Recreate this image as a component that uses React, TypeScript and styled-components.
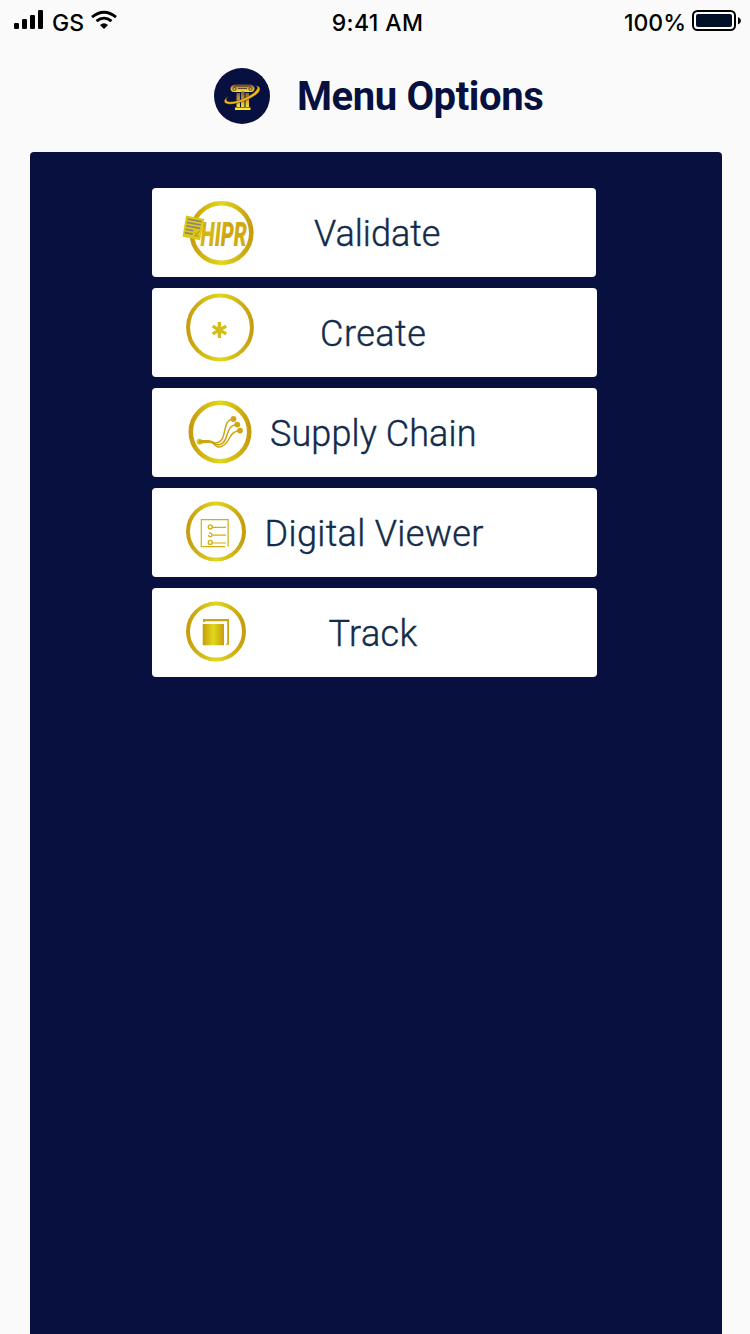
import React from 'react';
import styled, { createGlobalStyle } from 'styled-components';

const GlobalStyle = createGlobalStyle`
  * { box-sizing: border-box; }
  body { margin: 0; background: #fafafa; }
`;

const Screen = styled.div`
  height: 1334px;
  display: flex;
  flex-direction: column;
  overflow: hidden;
  background: #fafafa;
  color: #07103e;
  font-family: Roboto, "Liberation Sans", sans-serif;
`;

const StatusBar = styled.header`
  height: 44px;
  padding: 0 9px 0 14px;
  display: grid;
  grid-template-columns: 1fr auto 1fr;
  align-items: center;
  color: #000;
  font: 500 23px/46px Inter, "Liberation Sans", sans-serif;
`;

const StatusGroup = styled.div<{ $end?: boolean }>`
  display: flex;
  height: 44px;
  justify-content: ${(p) => (p.$end ? 'flex-end' : 'flex-start')};
  svg { flex: none; }
`;

const StatusText = styled.span<{ $spacing: number; $left?: number; $right?: number }>`
  letter-spacing: ${(p) => p.$spacing}px;
  margin-left: ${(p) => p.$left ?? 0}px;
  margin-right: ${(p) => p.$right ?? 0}px;
  height: 44px;
  white-space: nowrap;
`;

const TitleBar = styled.div`
  height: 108px;
  padding: 24px 0 0 214px;
  display: flex;
  align-items: flex-start;
`;

const Title = styled.h1`
  margin: 1px 0 0 27px;
  font-size: 40px;
  line-height: 56px;
  font-weight: 700;
  letter-spacing: -0.4px;
  white-space: nowrap;
`;

const Panel = styled.main`
  flex: 1;
  margin: 0 28px 0 30px;
  padding: 36px 0 0 122px;
  display: flex;
  flex-direction: column;
  gap: 11.5px;
  background: #07103e;
  border-radius: 4px 4px 0 0;
`;

const MenuButton = styled.button<{ $width: number }>`
  width: ${(p) => p.$width}px;
  height: 88.5px;
  flex: none;
  padding: 0;
  border: 0;
  border-radius: 4px;
  background: #fff;
  color: #122b4a;
  font-family: inherit;
  display: grid;
  grid-template-columns: 1fr;
  align-items: center;
`;

const IconSlot = styled.span`
  grid-area: 1 / 1;
  height: 88px;
  align-self: start;
  justify-self: start;
  svg { display: block; }
`;

const Label = styled.span<{ $spacing: number; $left: number }>`
  grid-area: 1 / 1;
  justify-self: start;
  margin-left: ${(p) => p.$left}px;
  padding-top: 4px;
  font-size: 36px;
  line-height: 44px;
  font-weight: 350;
  -webkit-text-stroke: 0.4px #122b4a;
  letter-spacing: ${(p) => p.$spacing}px;
  white-space: nowrap;
`;

const Gradients = () => (
  <svg width="0" height="0" style={{ position: 'absolute' }} aria-hidden>
    <defs>
      <linearGradient id="gold" x1="0" y1="0" x2="1" y2="0">
        <stop offset="0" stopColor="#c79d0f" />
        <stop offset="0.5" stopColor="#e0d81c" />
        <stop offset="1" stopColor="#c79d0f" />
      </linearGradient>
      <linearGradient id="letters" x1="0" y1="0" x2="1" y2="0.4">
        <stop offset="0" stopColor="#cfa90f" />
        <stop offset="0.35" stopColor="#d6ba14" />
        <stop offset="0.65" stopColor="#cda50f" />
        <stop offset="1" stopColor="#cfae12" />
      </linearGradient>
      <linearGradient id="pillar" x1="0" y1="0" x2="0" y2="1">
        <stop offset="0" stopColor="#7b552b" />
        <stop offset="0.5" stopColor="#d8a83a" />
        <stop offset="1" stopColor="#fff12c" />
      </linearGradient>
    </defs>
  </svg>
);

const Ring = ({ cx, cy, r, w }: { cx: number; cy: number; r: number; w: number }) => (
  <circle cx={cx} cy={cy} r={r} fill="none" stroke="url(#gold)" strokeWidth={w} />
);

const ValidateIcon = () => (
  <svg width="110" height="88" viewBox="0 0 110 88">
    <Ring cx={69.5} cy={45} r={29.8} w={4.6} />
    <text transform="translate(48.500 58) scale(.61 1)" fontFamily="Roboto, sans-serif" fontSize="34" fontWeight="900" fontStyle="italic" fill="url(#letters)">HIPR</text>
    <path d="M34 27.500 52.300 31 48 52.200 30.500 48.700z" fill="#dcc818" />
    <path d="m35.500 31 14 2.600M34.800 34.400l14 2.600M34.100 37.800l14 2.600M33.400 41.200l8 1.500M32.700 44.600l8 1.500" stroke="#8d8778" strokeWidth="1.600" />
    <path d="m43 44.500 1.500 2 3-3.500m-5 4.500 4 .6" stroke="#a8830e" strokeWidth=".9" fill="none" />
  </svg>
);

const CreateIcon = () => (
  <svg width="110" height="88" viewBox="0 0 110 88">
    <Ring cx={68} cy={39.5} r={31.9} w={4} />
    <path d="M67.4 34v16M60.6 38.1l13.6 7.8M60.6 45.9l13.6-7.8" stroke="#d3bd16" strokeWidth="3.4" />
  </svg>
);

const SupplyIcon = () => (
  <svg width="110" height="88" viewBox="0 0 110 88">
    <Ring cx={68} cy={44} r={29.2} w={4.6} />
    <g fill="none" stroke="#cda711" strokeWidth="1.500" strokeLinecap="round">
      <path d="M48 53C56 52.500 60 55.500 65 54.800C76 53 69 31.500 81.500 31" />
      <path d="M60 54C63 56.500 65 57.500 68 56.500C78 53.500 72 37.500 85.300 36.600" />
      <path d="M60 54.500C65 59.500 67 59.500 70 58.200C79 54 76 43.500 88 42.600" />
    </g>
    <circle cx="47.500" cy="53.700" r="2.900" fill="#ddc51a" />
    <path d="M47 51.700c5 1 10-1 16 2.500l1 2c-6-1.500-11-1.500-17-.2z" fill="#cda711" />
    <g fill="#cda711">
      <circle cx="81.500" cy="31" r="2.900" />
      <circle cx="85.300" cy="36.600" r="2.900" />
      <circle cx="88" cy="42.600" r="2.900" />
    </g>
  </svg>
);

const ViewerIcon = () => (
  <svg width="110" height="88" viewBox="0 0 110 88">
    <Ring cx={64} cy={43.5} r={28} w={4} />
    <g fill="none" stroke="#d0b015" strokeWidth="1.200">
      <path d="M76.100 58.500V31.700H49.300v27H73" />
      <path d="M60.500 39.300H74M60.500 47.200H74M60.500 55H74" />
      <circle cx="58.300" cy="38.900" r="2" strokeWidth="1.400" />
      <path d="M57 45.300c3.500-1 4 3.200 1.500 3.400-1 .1-2-.5-2-1.600" strokeWidth="1.400" />
      <circle cx="58.300" cy="54.400" r="2" strokeWidth="1.400" />
    </g>
  </svg>
);

const TrackIcon = () => (
  <svg width="110" height="88" viewBox="0 0 110 88">
    <Ring cx={64} cy={43.500} r={28} w={4} />
    <path d="M50.700 36H72v21.300H50.700z" fill="url(#gold)" />
    <path d="M51 33.900v-2.800h26v25.700h-3v-1h1.200V33.300H53v.6z" fill="#c9a512" />
  </svg>
);

const BrandLogo = () => (
  <svg width="56" height="56" viewBox="0 0 56 56">
    <circle cx="28" cy="28" r="28" fill="#07103e" />
    <g fill="url(#pillar)">
      <path d="M20.500 16.500h16q4.500 1 4 4.500-.800 3.500-4.500 3H21q-4 .5-4.500-3-.3-3.500 4-4.500z" />
      <path d="M22.500 25h3.500v14h-3.500zM27 23.500h3.500V39H27zM31.500 25H35v14h-3.500zM21 39.500h15.500V42H21z" />
    </g>
    <g fill="none" stroke="#3a2d33" strokeWidth=".8">
      <path d="M20 18h17M24 20.500h9" />
      <circle cx="20.500" cy="21" r="1.600" />
      <circle cx="36.500" cy="21" r="1.600" />
    </g>
    <path d="M15.500 27.500C5 34 12 38 22 35.500c11-2.500 24-9 24-14.500 0-3-3-3.500-6-3 3-.2 4 1 3 3-2.500 5-13 10-21 12-8 2-13 0-6.500-5.500z" fill="#f7b70f" stroke="#07103e" strokeWidth=".4" />
  </svg>
);

const SignalIcon = () => (
  <svg width="30" height="44" viewBox="0 0 30 44">
    <rect x="0" y="23" width="5" height="6" rx="1.200" />
    <rect x="8" y="19" width="5" height="10" rx="1.200" />
    <rect x="16" y="15" width="5" height="14" rx="1.200" />
    <rect x="24" y="10" width="5" height="19" rx="1.200" />
  </svg>
);

const WifiIcon = () => (
  <svg width="26" height="44" viewBox="0 0 26 44">
    <g fill="none" stroke="#000" strokeWidth="2.800">
      <path d="M1 17.200Q13 7.300 25 17.200" />
      <path d="M5.500 21.200Q13 15 20.500 21.200" />
    </g>
    <path d="M9 25q4-3.300 8 0l-4 4z" />
  </svg>
);

const BatteryIcon = () => (
  <svg width="49" height="44" viewBox="0 0 49 44">
    <rect x="1" y="11" width="42" height="19" rx="4.500" fill="#fff" stroke="#000" strokeWidth="2" />
    <rect x="4" y="14" width="36" height="13" rx="2" fill="#001127" />
    <path d="M46 17q3 1.500 3 3.700T46 24.500z" />
  </svg>
);

const items = [
  { label: 'Validate', Icon: ValidateIcon, spacing: 0, left: 162, width: 444 },
  { label: 'Create', Icon: CreateIcon, spacing: 0.5, left: 168, width: 444.5 },
  { label: 'Supply Chain', Icon: SupplyIcon, spacing: 0.1, left: 118, width: 444.5 },
  { label: 'Digital Viewer', Icon: ViewerIcon, spacing: 0.35, left: 112.5, width: 444.5 },
  { label: 'Track', Icon: TrackIcon, spacing: 0.4, left: 176.5, width: 444.5 },
];

export default function App() {
  return (
    <Screen>
      <GlobalStyle />
      <Gradients />
      <StatusBar>
        <StatusGroup>
          <SignalIcon />
          <StatusText $spacing={0} $left={8} $right={7}>GS</StatusText>
          <WifiIcon />
        </StatusGroup>
        <StatusText $spacing={0.4}>9:41 AM</StatusText>
        <StatusGroup $end>
          <StatusText $spacing={0} $right={6}>100%</StatusText>
          <BatteryIcon />
        </StatusGroup>
      </StatusBar>
      <TitleBar>
        <BrandLogo />
        <Title>Menu Options</Title>
      </TitleBar>
      <Panel>
        {items.map(({ label, Icon, spacing, left, width }) => (
          <MenuButton key={label} $width={width}>
            <IconSlot><Icon /></IconSlot>
            <Label $spacing={spacing} $left={left}>{label}</Label>
          </MenuButton>
        ))}
      </Panel>
    </Screen>
  );
}
